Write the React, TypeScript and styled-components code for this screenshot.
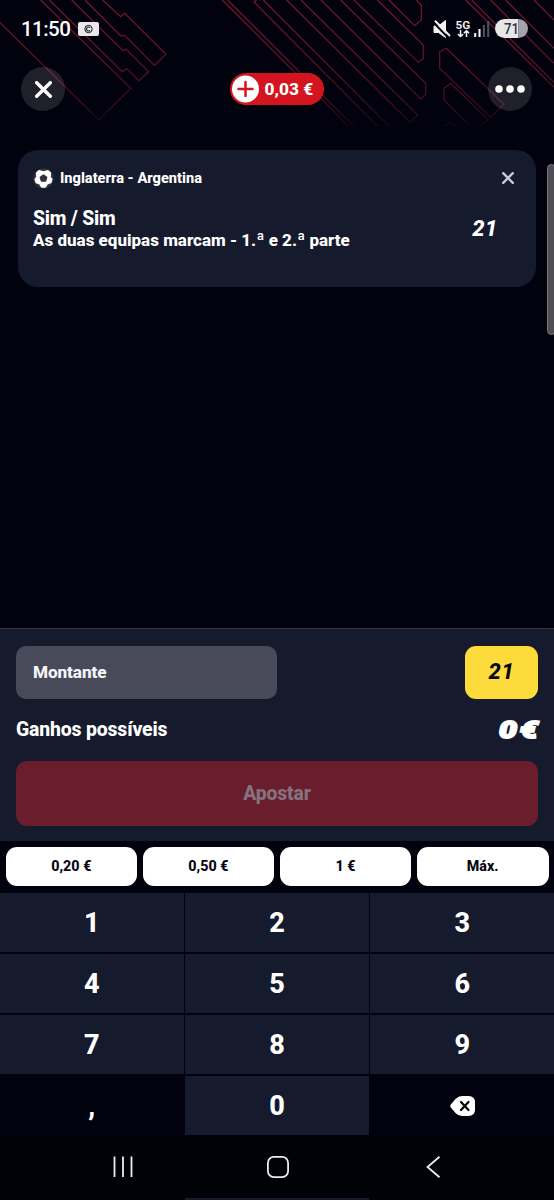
import React from "react";
import styled, { createGlobalStyle } from "styled-components";

const GlobalStyle = createGlobalStyle`
  * { box-sizing: border-box; }
  body { margin: 0; background: #02030d; }
  button { font: inherit; color: inherit; border: 0; padding: 0; background: none; }
`;

const Screen = styled.div`
  position: relative;
  display: flex;
  flex-direction: column;
  width: 554px;
  height: 1200px;
  overflow: hidden;
  background: #02020e;
  color: #fff;
  font-family: Roboto, "Liberation Sans", sans-serif;
  font-weight: 800;
`;

const Backdrop = styled.svg`
  position: absolute;
  top: 0;
  left: 0;
`;

const StatusBar = styled.div`
  position: relative;
  display: flex;
  align-items: center;
  height: 57px;
  padding: 0 25.5px 0 21px;
`;

const Clock = styled.span`
  width: 57px;
  font-size: 20.5px;
  font-weight: 500;
  line-height: 24px;
  letter-spacing: -0.55px;
`;

const StatusIcons = styled.svg`
  margin-left: auto;
`;

const Header = styled.header`
  position: relative;
  display: flex;
  align-items: center;
  justify-content: space-between;
  height: 64px;
  padding: 0 22px 0 21px;
`;

const RoundButton = styled.button`
  display: grid;
  place-items: center;
  width: 44px;
  height: 44px;
  border-radius: 50%;
  background: rgba(255, 255, 255, 0.12);
`;

const Balance = styled.button`
  display: flex;
  align-items: center;
  gap: 5.5px;
  width: 94px;
  height: 32px;
  padding-left: 2.5px;
  border-radius: 16px;
  background: #d4151f;
  font-size: 17.3px;
`;

const BetList = styled.main`
  position: relative;
  flex: 0 0 507px;
  padding: 29px 18px 0;
`;

const BetCard = styled.article`
  display: flex;
  flex-direction: column;
  height: 137px;
  padding: 18px 15px 0;
  border-radius: 20px;
  background: #161a2d;
`;

const EventRow = styled.div`
  display: flex;
  align-items: center;
  gap: 6px;
  height: 20px;
  font-size: 14.6px;

  button { margin-left: auto; margin-right: 7px; display: grid; }
`;

const SelectionRow = styled.div`
  display: flex;
  align-items: center;
  justify-content: space-between;
  margin-top: 20px;
  padding-right: 23px;
`;

const Outcome = styled.div`
  font-size: 19.3px;
  line-height: 22px;
  letter-spacing: -0.2px;
`;

const Market = styled.div`
  font-size: 17px;
  line-height: 20px;
`;

const Ordinal = styled.span`
  font-size: 18.5px;
  font-weight: 500;
  line-height: 1;
`;

const Odds = styled.span`
  font-size: 22px;
  line-height: 26px;
  font-style: italic;
  letter-spacing: 0.6px;
`;

const ScrollThumb = styled.div`
  position: absolute;
  top: 164px;
  right: -2px;
  width: 9px;
  height: 171px;
  border: 1px solid #77777c;
  border-radius: 5px;
  background: #4e4e54;
`;

const StakePanel = styled.section`
  position: relative;
  flex: 0 0 213px;
  padding: 16.5px 16px 0;
  border-top: 1px solid #303344;
  background: #161a2d;
`;

const SplitRow = styled.div<{ $height: number }>`
  display: flex;
  align-items: center;
  justify-content: space-between;
  height: ${(p) => p.$height}px;
`;

const AmountField = styled.div`
  display: flex;
  align-items: center;
  width: 261px;
  height: 53px;
  padding: 0 0 1px 17px;
  border-radius: 10px;
  background: #484a5a;
  color: #f3f4fc;
  font-size: 17.2px;
  letter-spacing: -0.1px;
`;

const TotalOdds = styled.div`
  display: grid;
  place-items: center;
  width: 73px;
  height: 53px;
  border-radius: 11px;
  background: #fddb3a;
  color: #0a0a12;
`;

const GainsLabel = styled.span`
  font-size: 19.4px;
  letter-spacing: -0.15px;
`;

const GainsValue = styled.span`
  font-size: 24.5px;
  font-weight: 900;
  font-style: italic;
  line-height: 24px;
  word-spacing: -4px;
  -webkit-text-stroke: 1.9px #fff;
  transform: scaleX(1.3);
  transform-origin: right;
`;

const PlaceBet = styled.button`
  width: 100%;
  height: 65px;
  border-radius: 11px;
  background: #6a1d2c;
  color: #85737f;
  font-size: 19.3px;
  letter-spacing: -0.1px;
`;

const QuickAmounts = styled.div`
  position: relative;
  display: grid;
  flex: 0 0 52px;
  grid-template-columns: repeat(4, 1fr);
  gap: 5.5px;
  padding: 6px 5.5px 7.5px;
`;

const Chip = styled.button`
  border-radius: 11px;
  background: #fff;
  color: #080811;
  font-size: 14.3px;
`;

const Keypad = styled.div`
  position: relative;
  display: grid;
  flex: 0 0 242px;
  grid-template-columns: repeat(3, 1fr);
  grid-template-rows: repeat(4, 1fr);
  gap: 2px 1.5px;
`;

const Key = styled.button<{ $plain?: boolean }>`
  display: grid;
  place-items: center;
  background: ${(p) => (p.$plain ? "transparent" : "#161a2d")};
  font-size: 27px;
  line-height: 32px;
`;

const NavBar = styled.nav`
  display: flex;
  align-items: center;
  justify-content: space-between;
  flex: 0 0 63px;
  padding: 0 110px 0 112px;
  background: #010108;
`;

const NextKeyRow = styled.div`
  width: 184px;
  height: 2px;
  margin-left: 185px;
  background: #161a2d;
`;

const circuitLines = [
  "M0 68L297 360L392 265L122 0",
  "M148 0L367 215L380 206L417 242L446 215L378 147L369 152L215 0",
  "M255 0L363 108L374 106L463 196L498 163L374 40L362 50L308 0",
  "M667 0L1046 379",
  "M683 0L1062 379",
  "M770 0L762 6L1133 379",
  "M790 0L1168 379",
  "M860 0L1231 368L1253 345L903 0",
  "M963 0L1262 297L1277 284V250L1022 0",
  "M1062 0L1255 187L1270 176V135L1132 0",
  "M1167 0L1244 77L1264 60V15L1249 0",
  "M1397 0L1662 262",
  "M1415 0L1662 247",
  "M1472 0L1662 190",
  "M1517 0L1662 145",
  "M1602 0L1662 60",
  "M1319 155L1339 145L1512 313L1472 352L1319 205Z",
  "M1412 379L1332 300V265L1352 250L1464 359L1442 379",
  "M1332 379L1352 368L1367 379",
];

const keys = ["1", "2", "3", "4", "5", "6", "7", "8", "9"];

function CircuitBackdrop() {
  return (
    <Backdrop width="554" height="128" viewBox="0 0 1662 384" fill="none">
      <defs>
        <linearGradient id="fade" gradientUnits="userSpaceOnUse" x1="0" y1="0" x2="0" y2="384">
          <stop offset="0" stopColor="#8a1731" stopOpacity="0.9" />
          <stop offset="0.5" stopColor="#7a152d" stopOpacity="0.8" />
          <stop offset="0.8" stopColor="#6c1429" stopOpacity="0.62" />
          <stop offset="1" stopColor="#6c1429" stopOpacity="0.15" />
        </linearGradient>
      </defs>
      {circuitLines.map((d) => (
        <path key={d} d={d} stroke="url(#fade)" strokeWidth="3.6" />
      ))}
    </Backdrop>
  );
}

function Cross({ size, width, color }: { size: number; width: number; color: string }) {
  const near = width / 2;
  const far = size - near;
  return (
    <svg width={size} height={size} viewBox={`0 0 ${size} ${size}`}>
      <path
        d={`M${near} ${near}L${far} ${far}M${far} ${near}L${near} ${far}`}
        stroke={color}
        strokeWidth={width}
        strokeLinecap="round"
      />
    </svg>
  );
}

export default function App() {
  return (
    <>
      <GlobalStyle />
      <Screen>
        <CircuitBackdrop />
        <StatusBar>
          <Clock>11:50</Clock>
          <svg width="21" height="14" viewBox="0 0 21 14">
            <rect width="21" height="14" rx="2" fill="#e9e9ec" />
            <circle cx="10.5" cy="7" r="3.7" fill="none" stroke="#15151d" strokeWidth="1" />
            <path d="M12 5.7A2 2 0 1 0 12 8.3" fill="none" stroke="#15151d" strokeWidth="1.1" />
          </svg>
          <StatusIcons width="97" height="24" viewBox="0 0 97 24">
            <path d="M2 9H6.500L13.500 3.500V20.500L6.500 15.500H2Z" fill="#f2f2f4" stroke="#f2f2f4" strokeLinejoin="round" />
            <path d="M1.500 5.500L16 20.500" stroke="#02020e" strokeWidth="1.800" />
            <path d="M3 3.800L18 19" stroke="#f2f2f4" strokeWidth="2" />
            <text x="23.600" y="11.500" fill="#f2f2f4" fontSize="11.800" fontWeight="600">5G</text>
            <path d="M28.500 13V19.500M25.900 17.100L28.500 19.500L31.100 17.100M34.500 20V13.700M31.900 16.100L34.500 13.700L37.100 16.100" fill="none" stroke="#f2f2f4" strokeWidth="1.500" />
            <path d="M43.200 16V20M47.500 12V20" stroke="#f2f2f4" strokeWidth="2.100" />
            <path d="M51.900 8V20M56.200 4V20" stroke="#505059" strokeWidth="2.100" />
            <path d="M72.500 2H86.500V21H72.500A9.500 9.500 0 0 1 72.500 2Z" fill="#e7e7ea" />
            <path d="M86.500 2A9.500 9.500 0 0 1 86.500 21Z" fill="#a4a4aa" />
            <text x="72" y="17" fill="#34343e" fontSize="15.500" fontWeight="500" style={{ fontKerning: "none" }} textLength="15" lengthAdjust="spacingAndGlyphs">71</text>
          </StatusIcons>
        </StatusBar>

        <Header>
          <RoundButton aria-label="Fechar">
            <Cross size={17} width={3.4} color="#fff" />
          </RoundButton>
          <Balance>
            <svg width="27" height="28" viewBox="0 0 27 28">
              <circle cx="13.500" cy="14" r="13.500" fill="#fff" />
              <path d="M6.500 14H20.500M13.500 7V21" stroke="#d4151f" strokeWidth="2.500" strokeLinecap="round" />
            </svg>
            0,03 €
          </Balance>
          <RoundButton aria-label="Mais">
            <svg width="30" height="8" viewBox="0 0 30 8" fill="#fff">
              <circle cx="4" cy="4" r="3.800" />
              <circle cx="15" cy="4" r="3.800" />
              <circle cx="26" cy="4" r="3.800" />
            </svg>
          </RoundButton>
        </Header>

        <BetList>
          <BetCard>
            <EventRow>
              <svg width="21" height="21" viewBox="0 0 21 21">
                <circle cx="10.500" cy="10.500" r="10.300" fill="#30313a" />
                <path
                  d="M6 2.800L10.500 4L15 2.800L17.500 5L17 9L18.800 11.200L17.800 14.500L14.200 15.800L12.400 19H8.600L6.800 15.800L3.200 14.500L2.200 11.200L4 9L3.500 5Z"
                  fill="#fff"
                  stroke="#fff"
                  strokeWidth="1.500"
                  strokeLinejoin="round"
                />
                <path d="M10.500 7.200L13.600 9.400L12.400 13H8.600L7.400 9.400Z" fill="#30313a" stroke="#30313a" strokeWidth="1.600" strokeLinejoin="round" />
              </svg>
              Inglaterra - Argentina
              <button aria-label="Remover">
                <Cross size={12} width={2.4} color="#c3c6da" />
              </button>
            </EventRow>
            <SelectionRow>
              <div>
                <Outcome>Sim / Sim</Outcome>
                <Market>
                  As duas equipas marcam - 1.<Ordinal>ª</Ordinal> e 2.<Ordinal>ª</Ordinal> parte
                </Market>
              </div>
              <Odds>21</Odds>
            </SelectionRow>
          </BetCard>
        </BetList>
        <ScrollThumb />

        <StakePanel>
          <SplitRow $height={53}>
            <AmountField>Montante</AmountField>
            <TotalOdds>
              <Odds>21</Odds>
            </TotalOdds>
          </SplitRow>
          <SplitRow $height={62}>
            <GainsLabel>Ganhos possíveis</GainsLabel>
            <GainsValue>0 €</GainsValue>
          </SplitRow>
          <PlaceBet>Apostar</PlaceBet>
        </StakePanel>

        <QuickAmounts>
          <Chip>0,20 €</Chip>
          <Chip>0,50 €</Chip>
          <Chip>1 €</Chip>
          <Chip>Máx.</Chip>
        </QuickAmounts>

        <Keypad>
          {keys.map((k) => (
            <Key key={k}>{k}</Key>
          ))}
          <Key $plain>,</Key>
          <Key>0</Key>
          <Key $plain aria-label="Apagar">
            <svg width="25" height="20" viewBox="0 0 25 20">
              <path d="M0.800 8.600L5.500 3Q8.300 0 12 0H18.500Q25 0 25 6.500V13.500Q25 20 18.500 20H12Q8.300 20 5.500 17L0.800 11.400Q-0.300 10 0.800 8.600Z" fill="#fff" />
              <path d="M11 6L18.500 14M18.500 6L11 14" stroke="#02020e" strokeWidth="2.200" strokeLinecap="round" />
            </svg>
          </Key>
        </Keypad>

        <NavBar>
          <svg width="22" height="22" viewBox="0 0 22 22">
            <path d="M2.500 0.500V21M11 0.500V21M19.500 0.500V21" stroke="#eeeef0" strokeWidth="1.800" />
          </svg>
          <svg width="22" height="22" viewBox="0 0 22 22">
            <rect x="0.900" y="0.900" width="20.200" height="20.200" rx="6" fill="none" stroke="#eeeef0" strokeWidth="1.800" />
          </svg>
          <svg width="22" height="22" viewBox="0 0 22 22">
            <path d="M17.500 0.800L5.500 11L17.500 21.200" fill="none" stroke="#eeeef0" strokeWidth="1.800" />
          </svg>
        </NavBar>
        <NextKeyRow />
      </Screen>
    </>
  );
}
